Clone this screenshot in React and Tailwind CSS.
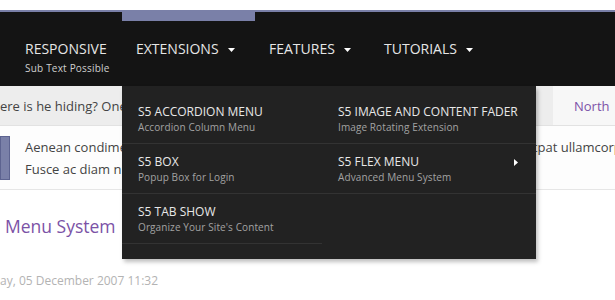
const font = { fontFamily: "'Open Sans', 'Noto Sans', sans-serif" };

function Caret() {
  return (
    <svg width="7" height="4" viewBox="0 0 7 4" className="ml-[9px] mt-[1px]">
      <path d="M0 0 L7 0 L3.5 4 Z" fill="#ffffff" />
    </svg>
  );
}

function NavItem({ label, sub, caret, active, width }) {
  if (active) {
    return (
      <div className={`${width} -mt-[2px] border-t-[11px] border-[#7a80a8] pt-[19px] pl-[14px]`}>
        <div className="flex items-center text-[14px] leading-[18px] text-[#e6e6e6]">
          {label}
          {caret && <Caret />}
        </div>
      </div>
    );
  }

  return (
    <div className={`${width} pt-[28px] pl-[14px]`}>
      <div className="flex items-center text-[14px] leading-[18px] text-[#e6e6e6]">
        {label}
        {caret && <Caret />}
      </div>
      {sub && (
        <div className="mt-[3px] text-[10px] leading-[14px] tracking-[0.2px] text-[#cfcfcf]">
          {sub}
        </div>
      )}
    </div>
  );
}

function MenuEntry({ title, sub, arrow, last }) {
  return (
    <div className={`relative h-[50px] pl-[16px] pt-[9px] ${last ? "" : "border-b border-[#333333]"}`}>
      <div className="text-[12px] leading-[18px] text-[#e8e8e8]">{title}</div>
      <div className="text-[10px] leading-[12px] tracking-[0.1px] text-[#a3a3a3]">{sub}</div>
      {arrow && (
        <svg width="4" height="7" viewBox="0 0 4 7" className="absolute right-[18px] top-[15px]">
          <path d="M0 0 L4 3.5 L0 7 Z" fill="#ffffff" />
        </svg>
      )}
    </div>
  );
}

export default function App() {
  return (
    <div className="relative w-[615px] h-[300px] overflow-hidden bg-white" style={font}>

      <div className="h-[10px] bg-white" />

      <div className="flex h-[76px] border-t-2 border-[#7a80a8] bg-[#141414] pl-[11px]">
        <NavItem label="RESPONSIVE" sub="Sub Text Possible" width="w-[111px]" />
        <NavItem label="EXTENSIONS" caret active width="w-[133px]" />
        <NavItem label="FEATURES" caret width="w-[115px]" />
        <NavItem label="TUTORIALS" caret width="w-[120px]" />
      </div>

      <div className="flex h-[40px] border-b border-[#e2e2e2] bg-[#ededed]">
        <div className="min-w-0 flex-1 whitespace-nowrap overflow-hidden pt-[10px] text-[13px] leading-[20px] text-[#444444]">
          ere is he hiding? One of the new sites is in the header
        </div>
        <div className="w-[62px] shrink-0 bg-[#f7f7f7] pl-[21px] pt-[10px] text-[13px] leading-[20px] text-[#7d52a8]">
          North
        </div>
      </div>

      <div className="flex h-[64px] border-b border-[#e6e6e6] bg-[#fdfdfd] pt-[10px]">
        <div className="h-[44px] w-[10px] shrink-0 border border-[#5d6390] bg-[#7a80a8]" />
        <div className="min-w-0 flex-1 overflow-hidden pl-[15px] text-[13px] leading-[22px] text-[#444444]">
          <div className="whitespace-nowrap">Aenean condimentum lorem sit amet ultrices nec, tincidunt a lacinia sed, quis a volutpat ullamcorper</div>
          <div className="whitespace-nowrap">Fusce ac diam nisl vitae</div>
        </div>
      </div>

      <div className="pl-[5px] pt-[22px] text-[17.5px] leading-[28px] text-[#7b52a6]">
        Menu System
      </div>

      <div className="pt-[33px] text-[12px] leading-[16px] text-[#b3b3b3]">
        ay, 05 December 2007 11:32
      </div>

      <div className="absolute left-[122px] top-[86px] flex h-[173px] w-[414px] bg-[#222222] pt-[8px] shadow-[2px_3px_4px_rgba(0,0,0,0.25)]">
        <div className="w-[200px]">
          <MenuEntry title="S5 ACCORDION MENU" sub="Accordion Column Menu" />
          <MenuEntry title="S5 BOX" sub="Popup Box for Login" />
          <MenuEntry title="S5 TAB SHOW" sub="Organize Your Site's Content" />
        </div>
        <div className="w-[214px]">
          <MenuEntry title="S5 IMAGE AND CONTENT FADER" sub="Image Rotating Extension" />
          <MenuEntry title="S5 FLEX MENU" sub="Advanced Menu System" arrow />
        </div>
      </div>

    </div>
  );
}
